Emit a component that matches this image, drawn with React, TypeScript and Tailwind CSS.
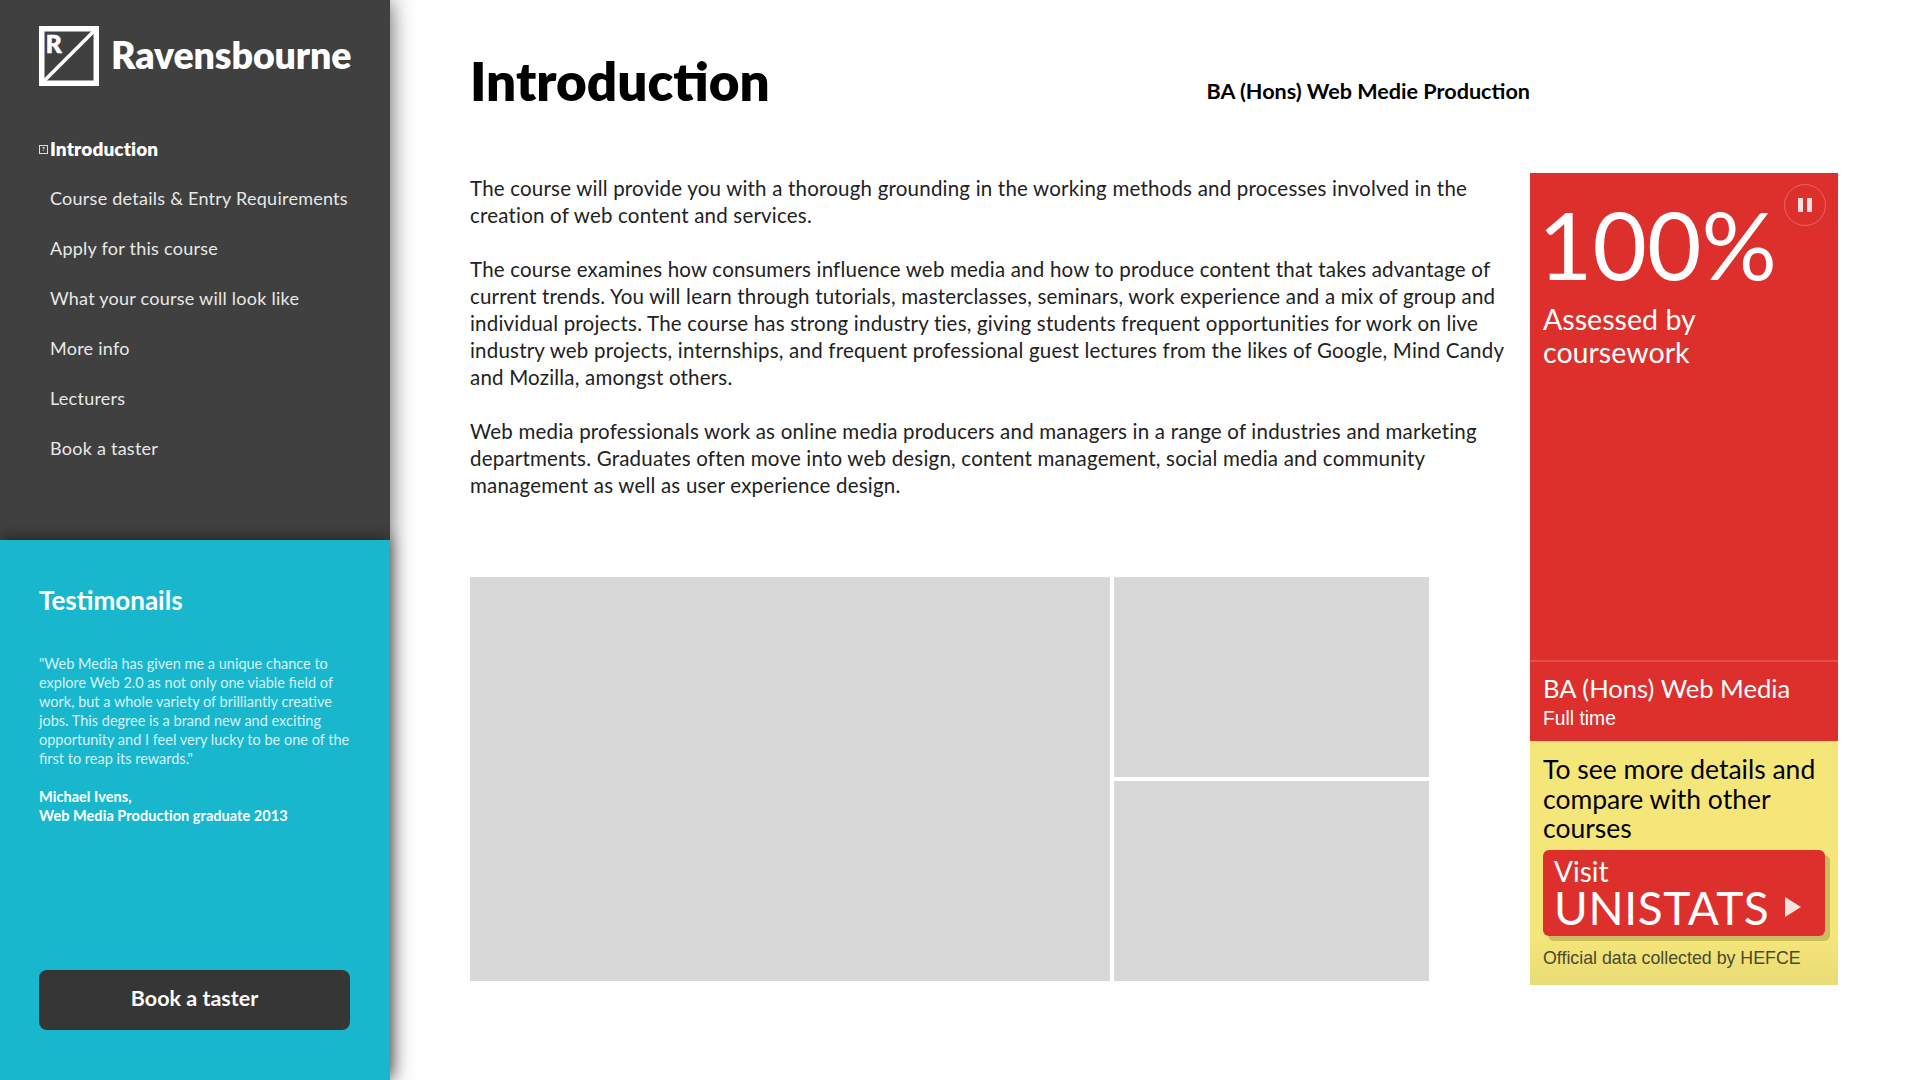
const navItems = [
  'Course details & Entry Requirements',
  'Apply for this course',
  'What your course will look like',
  'More info',
  'Lecturers',
  'Book a taster',
]

function Logo() {
  return (
    <svg width="60" height="60" viewBox="0 0 60 60" className="shrink-0">
      <rect x="2.75" y="2.75" width="54.5" height="54.5" fill="none" stroke="#fff" strokeWidth="5.5" />
      <path d="M4 56 L56 4" stroke="#fff" strokeWidth="3.5" />
      <text x="6.8" y="26.7" fill="#fff" stroke="#fff" strokeWidth="0.7" fontSize="24.5" fontWeight="900" fontFamily="Lato, sans-serif">R</text>
    </svg>
  )
}

function Sidebar() {
  return (
    <aside className="relative z-10 flex h-full w-[390px] shrink-0 flex-col shadow-[0_0_22px_rgba(0,0,0,0.65)]">
      <div className="h-[540px] bg-[#404040] pt-[26px] pr-[40px] pl-[39px] text-white">
        <div className="flex h-[60px] items-center gap-[12px]">
          <Logo />
          <span className="pb-[2px] text-[37.5px] leading-none font-extrabold tracking-[-0.1px]">Ravensbourne</span>
        </div>
        <nav className="mt-[38px] flex flex-col">
          <a className="flex h-[50px] items-center text-[19px] font-extrabold tracking-[0.1px]">
            <span className="mr-[2px] flex h-[9px] w-[9px] items-center justify-center border border-[#ddd] text-[6px] leading-none font-bold">?</span>
            Introduction
          </a>
          {navItems.map((item) => (
            <a key={item} className="flex h-[50px] items-center pb-[1px] pl-[11px] text-[18px] tracking-[0.25px] text-[#e8e8e8]">
              {item}
            </a>
          ))}
        </nav>
      </div>
      <div className="relative flex flex-1 flex-col bg-[#19b7ce] pt-[46px] pr-[40px] pb-[50px] pl-[39px] text-white shadow-[0_-2px_14px_rgba(0,0,0,0.45)]">
        <h2 className="text-[26px] leading-[28px] font-bold">Testimonails</h2>
        <p className="mt-[40px] text-[14.5px] leading-[19px] text-[#d5f2f6]">
          "Web Media has given me a unique chance to explore Web 2.0 as not only one viable field of work, but a whole variety of brilliantly creative jobs. This degree is a brand new and exciting opportunity and I feel very lucky to be one of the first to reap its rewards."
        </p>
        <p className="mt-[19px] text-[14.5px] leading-[19px] font-bold tracking-[0.05px]">
          Michael Ivens,
          <br />
          Web Media Production graduate 2013
        </p>
        <button className="mt-auto h-[60px] w-full rounded-[8px] bg-[#363636] pb-[4px] text-[21.5px] font-bold text-white">Book a taster</button>
      </div>
    </aside>
  )
}

function Unistats() {
  return (
    <div className="flex h-[812px] w-[308px] shrink-0 flex-col">
      <div className="relative flex-1 bg-[#dd302c] pt-[18px] pl-[8px] text-white">
        <div className="text-[94px] leading-[105px] font-normal">100%</div>
        <div className="pt-[7px] pl-[5px] text-[28.6px] leading-[33px]">
          Assessed by
          <br />
          coursework
        </div>
        <button className="absolute top-[11px] right-[12px] flex h-[42px] w-[42px] items-center justify-center gap-[4px] rounded-full border border-white/25">
          <span className="h-[14px] w-[5px] bg-white/85" />
          <span className="h-[14px] w-[5px] bg-white/85" />
        </button>
      </div>
      <div className="h-[81px] border-t-2 border-[#e4504c] bg-[#dd302c] px-[13px] pt-[11px] text-white">
        <div className="text-[25.6px] leading-[30px]">BA (Hons) Web Media</div>
        <div className="mt-[4px] font-['Liberation_Sans'] text-[19.3px] leading-[24px]">Full time</div>
      </div>
      <div className="h-[244px] bg-gradient-to-b from-[#f5e67a] from-80% to-[#e9db76] px-[13px] pt-[14px]">
        <div className="text-[26.5px] leading-[29.5px] text-black">
          To see more details and compare with other courses
        </div>
        <a className="mt-[6px] flex h-[86px] w-[282px] flex-col rounded-[6px] bg-[#dd302c] px-[11px] pt-[7px] text-white shadow-[5px_5px_0_#c9bd60]">
          <span className="text-[28px] leading-[28px]">Visit</span>
          <span className="flex items-center text-[46px] leading-[46px] tracking-[0.6px]">
            UNISTATS
            <svg width="16" height="20" viewBox="0 0 16 20" className="mb-[2px] ml-[16px]">
              <path d="M0 0 L16 10 L0 20 Z" fill="#f7e3dc" />
            </svg>
          </span>
        </a>
        <div className="mt-[11px] font-['Liberation_Sans'] text-[17.8px] leading-[22px] text-[#4b4a2c]">Official data collected by HEFCE</div>
      </div>
    </div>
  )
}

export default function App() {
  return (
    <div className="flex h-screen w-full overflow-hidden bg-white font-['Lato',sans-serif]">
      <Sidebar />
      <main className="flex-1 pl-[80px]">
        <header className="flex h-[173px] w-[1060px] items-start justify-between pt-[50px]">
          <h1 className="text-[53px] leading-[62px] font-extrabold text-black">Introduction</h1>
          <div className="pt-[29px] text-[21.6px] leading-[24px] font-bold text-black">BA (Hons) Web Medie Production</div>
        </header>
        <div className="flex">
          <div className="w-[1060px]">
            <div className="flex max-w-[1040px] flex-col gap-[27px] pt-[2px] text-[20.5px] leading-[27px] tracking-[0.2px] text-[#222]">
              <p>The course will provide you with a thorough grounding in the working methods and processes involved in the creation of web content and services.</p>
              <p>The course examines how consumers influence web media and how to produce content that takes advantage of current trends. You will learn through tutorials, masterclasses, seminars, work experience and a mix of group and individual projects. The course has strong industry ties, giving students frequent opportunities for work on live industry web projects, internships, and frequent professional guest lectures from the likes of Google, Mind Candy and Mozilla, amongst others.</p>
              <p>Web media professionals work as online media producers and managers in a range of industries and marketing departments. Graduates often move into web design, content management, social media and community management as well as user experience design.</p>
            </div>
            <div className="mt-[78px] flex h-[404px] w-[959px] gap-[4px]">
              <div className="w-[640px] bg-[#d8d8d8]" />
              <div className="flex flex-1 flex-col gap-[4px]">
                <div className="flex-1 bg-[#d8d8d8]" />
                <div className="flex-1 bg-[#d8d8d8]" />
              </div>
            </div>
          </div>
          <Unistats />
        </div>
      </main>
    </div>
  )
}
